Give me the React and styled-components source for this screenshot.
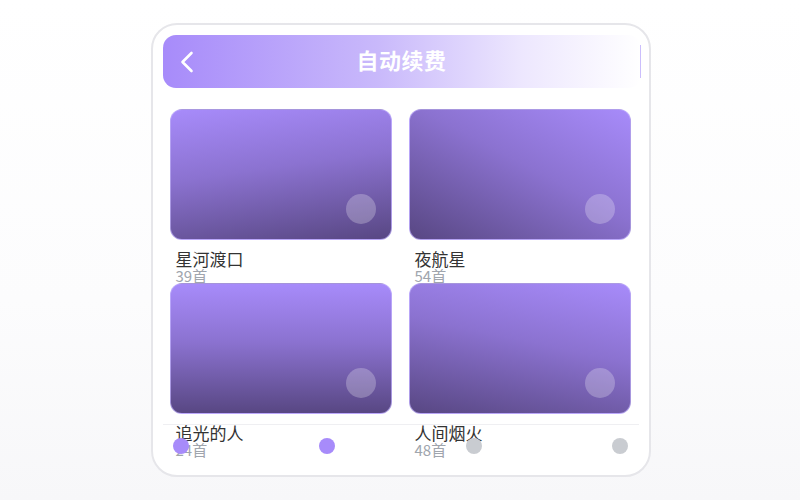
import React from 'react';
import styled, { createGlobalStyle } from 'styled-components';

const GlobalStyle = createGlobalStyle`
  html, body {
    margin: 0;
    padding: 0;
  }
  body {
    background: linear-gradient(180deg, #ffffff 0%, #fcfcfd 60%, #f7f7f9 100%);
    font-family: "Noto Sans CJK SC", "Noto Sans", sans-serif;
  }
`;

const playlists = [
  { id: 1, title: '星河渡口', count: 39, angle: 172 },
  { id: 2, title: '夜航星', count: 54, angle: 208 },
  { id: 3, title: '追光的人', count: 24, angle: 180 },
  { id: 4, title: '人间烟火', count: 48, angle: 192 },
];

const pages = [true, true, false, false];

const BackIcon = () => (
  <svg width="14" height="22" viewBox="0 0 14 22" fill="none">
    <path d="M11.5 2 L2.5 11 L11.5 20" stroke="#fff" strokeWidth="2.6" strokeLinecap="round" strokeLinejoin="round" />
  </svg>
);

const App = () => {
  return (
    <Page>
      <GlobalStyle />
      <Frame>
        <Header>
          <BackButton aria-label="返回">
            <BackIcon />
          </BackButton>
          <Title>自动续费</Title>
          <EdgeLine />
        </Header>

        <Content>
          <Grid>
            {playlists.map(item => (
              <Item key={item.id}>
                <Cover angle={item.angle}>
                  <PlayDot />
                </Cover>
                <ItemTitle>{item.title}</ItemTitle>
                <ItemCount>{item.count}首</ItemCount>
              </Item>
            ))}
          </Grid>
        </Content>

        <Footer>
          {pages.map((active, i) => (
            <Dot key={i} active={active} />
          ))}
        </Footer>
      </Frame>
    </Page>
  );
};

const Page = styled.div`
  height: 100vh;
  display: flex;
  align-items: center;
  justify-content: center;
  padding-left: 1px;
  box-sizing: border-box;
`;

const Frame = styled.div`
  width: 500px;
  height: 454px;
  box-sizing: border-box;
  border: 2px solid #e6e6ea;
  border-radius: 26px;
  background: #fff;
  padding-top: 10px;
  display: flex;
  flex-direction: column;
`;

const Header = styled.div`
  height: 53px;
  margin: 0 8px 0 10px;
  border-radius: 13px;
  background: linear-gradient(90deg, #a78bfa 0%, #c9b9fb 45%, #ede7fe 75%, #ffffff 100%);
  display: grid;
  grid-template-columns: 48px 1fr 48px;
  align-items: center;
  flex-shrink: 0;
`;

const BackButton = styled.button`
  border: none;
  background: none;
  padding: 0 0 0 17px;
  height: 100%;
  display: flex;
  align-items: center;
  cursor: pointer;
`;

const Title = styled.h1`
  margin: -5px 0 0;
  text-align: center;
  color: #fff;
  font-size: 22px;
  font-weight: 700;
  letter-spacing: 0.5px;
  line-height: 1;
`;

const EdgeLine = styled.span`
  justify-self: end;
  width: 1px;
  height: 33px;
  background: #cbbefc;
`;

const Content = styled.div`
  height: 315px;
  margin-top: 21px;
  padding: 0 17px;
  flex-shrink: 0;
`;

const Grid = styled.div`
  display: grid;
  grid-template-columns: 222px 222px;
  grid-auto-rows: 160px;
  column-gap: 17px;
  row-gap: 14px;
`;

const Item = styled.div`
  display: flex;
  flex-direction: column;
  min-height: 0;
`;

const Cover = styled.div`
  height: 131px;
  flex-shrink: 0;
  box-sizing: border-box;
  border-radius: 12px;
  border: 1px solid rgba(196, 181, 253, 0.7);
  background: ${p => `linear-gradient(${p.angle}deg, #a78bfa 0%, #8b72d0 45%, #584783 100%)`};
  display: flex;
  align-items: flex-end;
  justify-content: flex-end;
  padding: 0 15px 15px 0;
`;

const PlayDot = styled.span`
  width: 30px;
  height: 30px;
  border-radius: 50%;
  background: rgba(255, 255, 255, 0.25);
`;

const ItemTitle = styled.div`
  margin-top: 9px;
  padding-left: 6px;
  font-size: 17px;
  line-height: 19px;
  color: #333;
  flex-shrink: 0;
`;

const ItemCount = styled.div`
  padding-left: 6px;
  font-size: 15px;
  line-height: 16px;
  color: #a0a5ad;
  flex-shrink: 0;
`;

const Footer = styled.div`
  margin: 0 10px;
  border-top: 1px solid #efeff2;
  padding: 13px 10px 0;
  display: flex;
  justify-content: space-between;
  align-items: flex-start;
  flex: 1;
`;

const Dot = styled.span`
  width: 16px;
  height: 16px;
  border-radius: 50%;
  background: ${p => (p.active ? '#a78bfa' : '#c9ccd1')};
`;

export default App;
